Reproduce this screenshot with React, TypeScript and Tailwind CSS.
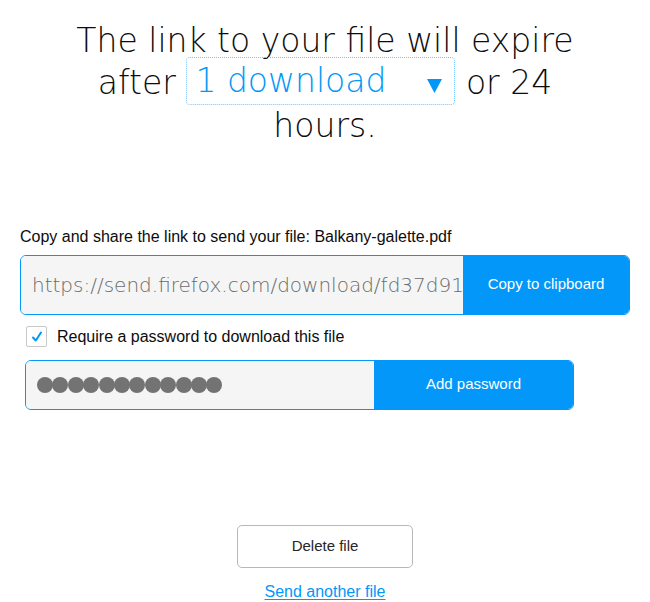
import { useState } from "react";

const body = { fontFamily: '"Liberation Sans Narrow", "Liberation Sans", Arial, sans-serif' };
const thin = { fontFamily: '"DejaVu Sans", sans-serif' };

export default function App() {
  const [checked, setChecked] = useState(true);

  return (
    <div className="w-[650px] min-h-[602px] bg-white flex flex-col items-center overflow-hidden" style={body}>
      <h1 className="w-[520px] mt-[20px] text-center text-[33px] leading-[42px] font-extralight text-[#0c0c0d]" style={thin}>
        The link to your file will expire after{" "}
        <span className="inline-flex items-center justify-between w-[269px] h-[48px] align-middle -mt-[8px] pl-[8px] pr-[12px] border border-dotted border-[#7cc4fb] rounded-[4px] text-[#0297f8]">
          <span>1 download</span>
          <svg width="15" height="14" viewBox="0 0 15 14" className="mt-[11px]">
            <path d="M0 0 H15 L7.5 14 Z" fill="#0297f8" />
          </svg>
        </span>{" "}
        or 24 hours.
      </h1>

      <div className="w-[610px] mt-[80px]">
        <p className="text-[16px] leading-[20px] text-[#0c0c0d]">
          Copy and share the link to send your file: Balkany-galette.pdf
        </p>

        <div className="mt-[8px] flex h-[60px] border border-[#0297f8] rounded-[6px] overflow-hidden">
          <div className="flex-1 flex items-center bg-[#f5f5f5] pl-[11px] overflow-hidden whitespace-nowrap">
            <span className="text-[20px] font-extralight text-[#6b6b6b]" style={thin}>
              https://send.firefox.com/download/fd37d91
            </span>
          </div>
          <button className="w-[166px] bg-[#0297f8] text-white text-[15px]">Copy to clipboard</button>
        </div>

        <label className="mt-[12px] ml-[6px] flex items-center gap-[10px] h-[20px] cursor-pointer">
          <span
            onClick={() => setChecked(!checked)}
            className="w-[21px] h-[21px] border border-[#c8c8c8] rounded-[2px] flex items-center justify-center bg-white"
          >
            {checked && (
              <svg width="14" height="14" viewBox="0 0 14 14" fill="none">
                <path d="M3 7.5 L5.8 10.5 L11 2.5" stroke="#0297f8" strokeWidth="2" strokeLinecap="round" strokeLinejoin="round" />
              </svg>
            )}
          </span>
          <span className="text-[16px] text-[#0c0c0d]">Require a password to download this file</span>
        </label>

        <div className="mt-[13px] ml-[5px] flex w-[549px] h-[50px] border border-[#0297f8] rounded-[6px] overflow-hidden">
          <div className="w-[348px] flex items-center bg-[#f5f5f5] pl-[11px]">
            <div className="flex">
              {Array.from({ length: 12 }).map((_, i) => (
                <span key={i} className="w-[16px] h-[16px] -mr-[0.6px] rounded-full bg-[#737373]" />
              ))}
            </div>
          </div>
          <button className="flex-1 bg-[#0297f8] text-white text-[15px]">Add password</button>
        </div>
      </div>

      <button className="shrink-0 mt-[115px] w-[176px] h-[43px] border border-[#b8b8b8] rounded-[5px] bg-white text-[15px] text-[#262626]">
        Delete file
      </button>
      <a href="#" className="mt-[12px] text-[16px] text-[#0297f8] underline underline-offset-2">
        Send another file
      </a>
    </div>
  );
}
